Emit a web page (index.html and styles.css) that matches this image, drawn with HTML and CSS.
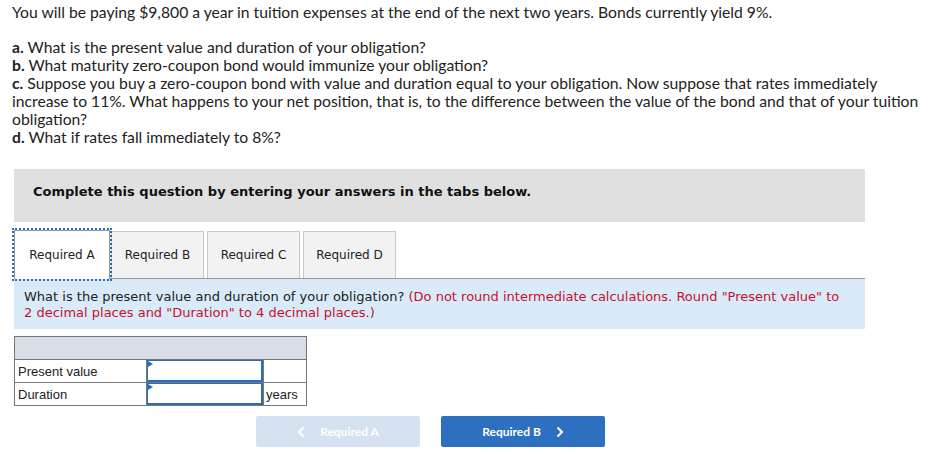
FILE: index.html
```html
<!DOCTYPE html>
<html>
<head>
<meta charset="utf-8">
<link rel="stylesheet" href="styles.css">
</head>
<body>
<div class="page">
  <p class="intro">You will be paying $9,800 a year in tuition expenses at the end of the next two years. Bonds currently yield 9%.</p>
  <p class="parts">
    <b>a.</b> What is the present value and duration of your obligation?<br>
    <b>b.</b> What maturity zero-coupon bond would immunize your obligation?<br>
    <b>c.</b> Suppose you buy a zero-coupon bond with value and duration equal to your obligation. Now suppose that rates immediately increase to 11%. What happens to your net position, that is, to the difference between the value of the bond and that of your tuition obligation?<br>
    <b>d.</b> What if rates fall immediately to 8%?
  </p>

  <div class="banner">Complete this question by entering your answers in the tabs below.</div>

  <div class="tabs">
    <div class="tab active">Required A</div>
    <div class="tab">Required B</div>
    <div class="tab">Required C</div>
    <div class="tab">Required D</div>
  </div>
  <div class="panel">What is the present value and duration of your obligation? <span class="note">(Do not round intermediate calculations. Round "Present value" to 2 decimal places and "Duration" to 4 decimal places.)</span></div>

  <table class="grid">
    <tr class="head"><td colspan="3"></td></tr>
    <tr><td class="lbl">Present value</td><td class="inp"><span class="box"></span></td><td class="unit"></td></tr>
    <tr><td class="lbl">Duration</td><td class="inp"><span class="box"></span></td><td class="unit">years</td></tr>
  </table>

  <div class="nav">
    <div class="btn prev"><svg class="chev" width="8" height="12" viewBox="0 0 8 12"><path d="M6.5 1.5 L2 6 L6.5 10.5" fill="none" stroke="#fff" stroke-width="2"/></svg>Required A</div>
    <div class="btn next">Required B<svg class="chev" width="8" height="12" viewBox="0 0 8 12"><path d="M1.5 1.5 L6 6 L1.5 10.5" fill="none" stroke="#fff" stroke-width="2"/></svg></div>
  </div>
</div>
</body>
</html>
```

FILE: styles.css
```css
html, body { margin: 0; padding: 0; background: #fff; }
.page { padding: 3px 9px 0 12px; width: 912px; }
.intro, .parts {
  font-family: Lato, "Open Sans", sans-serif;
  font-size: 15.7px;
  line-height: 18px;
  color: #222;
  margin: 0;
}
.parts { margin-top: 17px; }
.parts b { font-weight: 700; }
.banner {
  margin: 23px 0 0 2px;
  width: 832px;
  height: 53px;
  background: #e0e0e0;
  font-family: Verdana, "DejaVu Sans", sans-serif;
  font-weight: bold;
  font-size: 13px;
  color: #111;
  padding-left: 19px;
  line-height: 45px;
}
.tabs {
  display: flex;
  margin: 8px 0 0 2px;
  gap: 3px;
  font-family: Verdana, "DejaVu Sans", sans-serif;
  font-size: 12px;
  color: #222;
}
.tab {
  width: 93px;
  height: 47px;
  box-sizing: border-box;
  border: 1px solid #c8c8c8;
  border-bottom: none;
  background: #f2f2f2;
  display: flex;
  align-items: center;
  justify-content: center;
  margin-top: 1px;
}
.tab.active {
  width: 96px;
  background: #fff;
  border: 1px solid #999;
  border-bottom: none;
  outline: 2px dotted #2a6ebb;
  outline-offset: 0;
  height: 49px;
  margin-top: 0;
  margin-bottom: -1px;
  position: relative;
  z-index: 1;
  margin-right: -2px;
}
.panel {
  margin-left: 2px;
  width: 851px;
  box-sizing: border-box;
  border-top: 1px solid #999;
  background: #d9ebf8;
  padding: 10px 14px 8px 10px;
  font-family: Verdana, "DejaVu Sans", sans-serif;
  font-size: 13px;
  line-height: 16px;
  color: #222;
}
.note { color: #c8102e; }
.grid {
  margin: 7px 0 0 2px;
  border-collapse: collapse;
  font-family: Arial, "Liberation Sans", sans-serif;
  font-size: 13px;
  color: #222;
}
.grid td { border: 1px solid #777; padding: 0; height: 22px; }
.grid .head td { background: #d9dde8; height: 22px; }
.grid .lbl { width: 128px; padding-left: 3px; }
.grid .inp { width: 116px; }
.grid .unit { width: 40px; padding-left: 2px; }
.box {
  display: block;
  box-sizing: border-box;
  height: 22px;
  border: 2px solid #2a6ebb;
  border-width: 1px 2px 2px 1px;
  position: relative;
}
.box::before {
  content: "";
  position: absolute;
  left: 0;
  top: 0;
  border-left: 5px solid #2a6ebb;
  border-top: 3px solid transparent;
  border-bottom: 3px solid transparent;
}
.nav {
  display: flex;
  gap: 21px;
  margin: 10px 0 0 244px;
}
.btn {
  width: 164px;
  height: 31px;
  border-radius: 2px;
  display: flex;
  align-items: center;
  justify-content: center;
  font-family: Lato, "Open Sans", sans-serif;
  font-weight: 700;
  font-size: 12px;
  color: #fff;
  gap: 15px;
}
.prev { background: #d6e2f2; }
.next { background: #2d70c0; }
```
